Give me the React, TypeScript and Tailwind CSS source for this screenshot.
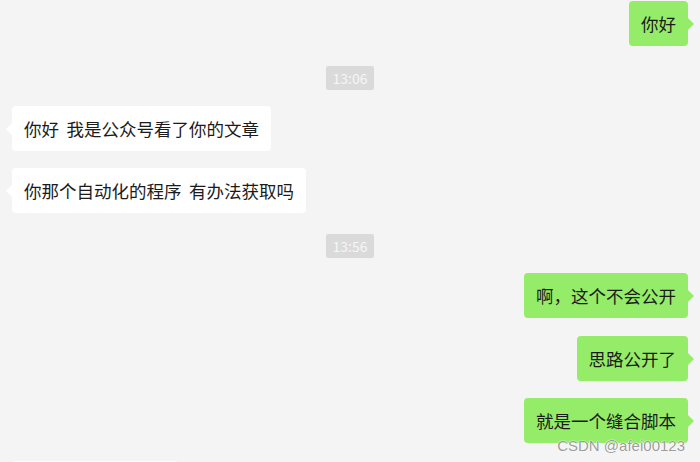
import React from "react";

type Msg =
    | { kind: "time"; text: string; mt: string }
    | { kind: "msg"; side: "left" | "right"; text: string; mt: string };

const messages: Msg[] = [
    { kind: "msg", side: "right", text: "你好", mt: "mt-px" },
    { kind: "time", text: "13:06", mt: "mt-5" },
    { kind: "msg", side: "left", text: "你好 我是公众号看了你的文章", mt: "mt-4" },
    { kind: "msg", side: "left", text: "你那个自动化的程序 有办法获取吗", mt: "mt-[17px]" },
    { kind: "time", text: "13:56", mt: "mt-[21px]" },
    { kind: "msg", side: "right", text: "啊，这个不会公开", mt: "mt-[15px]" },
    { kind: "msg", side: "right", text: "思路公开了", mt: "mt-[18px]" },
    { kind: "msg", side: "right", text: "就是一个缝合脚本", mt: "mt-[17px]" },
];

function Arrow({ isRight }: { isRight: boolean }) {
    return isRight ? (
        <span className="absolute top-1/2 -right-[6px] -translate-y-1/2 border-y-[6px] border-l-[6px] border-y-transparent border-l-[#95ec69]" />
    ) : (
        <span className="absolute top-1/2 -left-[6px] -translate-y-1/2 border-y-[6px] border-r-[6px] border-y-transparent border-r-white" />
    );
}

function Bubble({ side, text, mt }: { side: "left" | "right"; text: string; mt: string }) {
    const isRight = side === "right";
    return (
        <div className={`flex ${isRight ? "justify-end" : "justify-start"} ${mt}`}>
            <div
                className={`relative rounded-[4px] px-3 py-[10px] leading-[25px] text-[17.5px] text-[#1b1b1b] [word-spacing:3.5px] ${
                    isRight ? "bg-[#95ec69]" : "bg-white"
                }`}
            >
                <Arrow isRight={isRight} />
                {text}
            </div>
        </div>
    );
}

export default function App() {
    return (
        <div
            className="relative h-[462px] w-[700px] overflow-hidden bg-[#f4f4f4] px-3"
            style={{ fontFamily: '"Noto Sans CJK SC", "Noto Sans", sans-serif' }}
        >
            <div className="flex flex-col">
                {messages.map((m, i) =>
                    m.kind === "time" ? (
                        <div key={i} className={`flex justify-center ${m.mt}`}>
                            <span className="flex h-6 w-12 items-center justify-center rounded-[2px] bg-[#dadada] text-[14px] text-[#f6f6f6]">
                                {m.text}
                            </span>
                        </div>
                    ) : (
                        <Bubble key={i} side={m.side} text={m.text} mt={m.mt} />
                    )
                )}
                {/* 下一条消息，只露出一点 */}
                <div className="mt-[18px] flex justify-start">
                    <div className="relative h-[45px] w-[166px] rounded-[4px] bg-white">
                        <Arrow isRight={false} />
                    </div>
                </div>
            </div>

            {/* 水印 */}
            <div
                className="absolute bottom-[5px] right-[15px] text-[15px] text-[#9c9c9c]"
                style={{
                    fontFamily: '"Liberation Sans", Arial, sans-serif',
                    textShadow: "0 0 1px #fff, 0 0 1px #fff, 0 0 1px #fff",
                }}
            >
                CSDN @afei00123
            </div>
        </div>
    );
}
